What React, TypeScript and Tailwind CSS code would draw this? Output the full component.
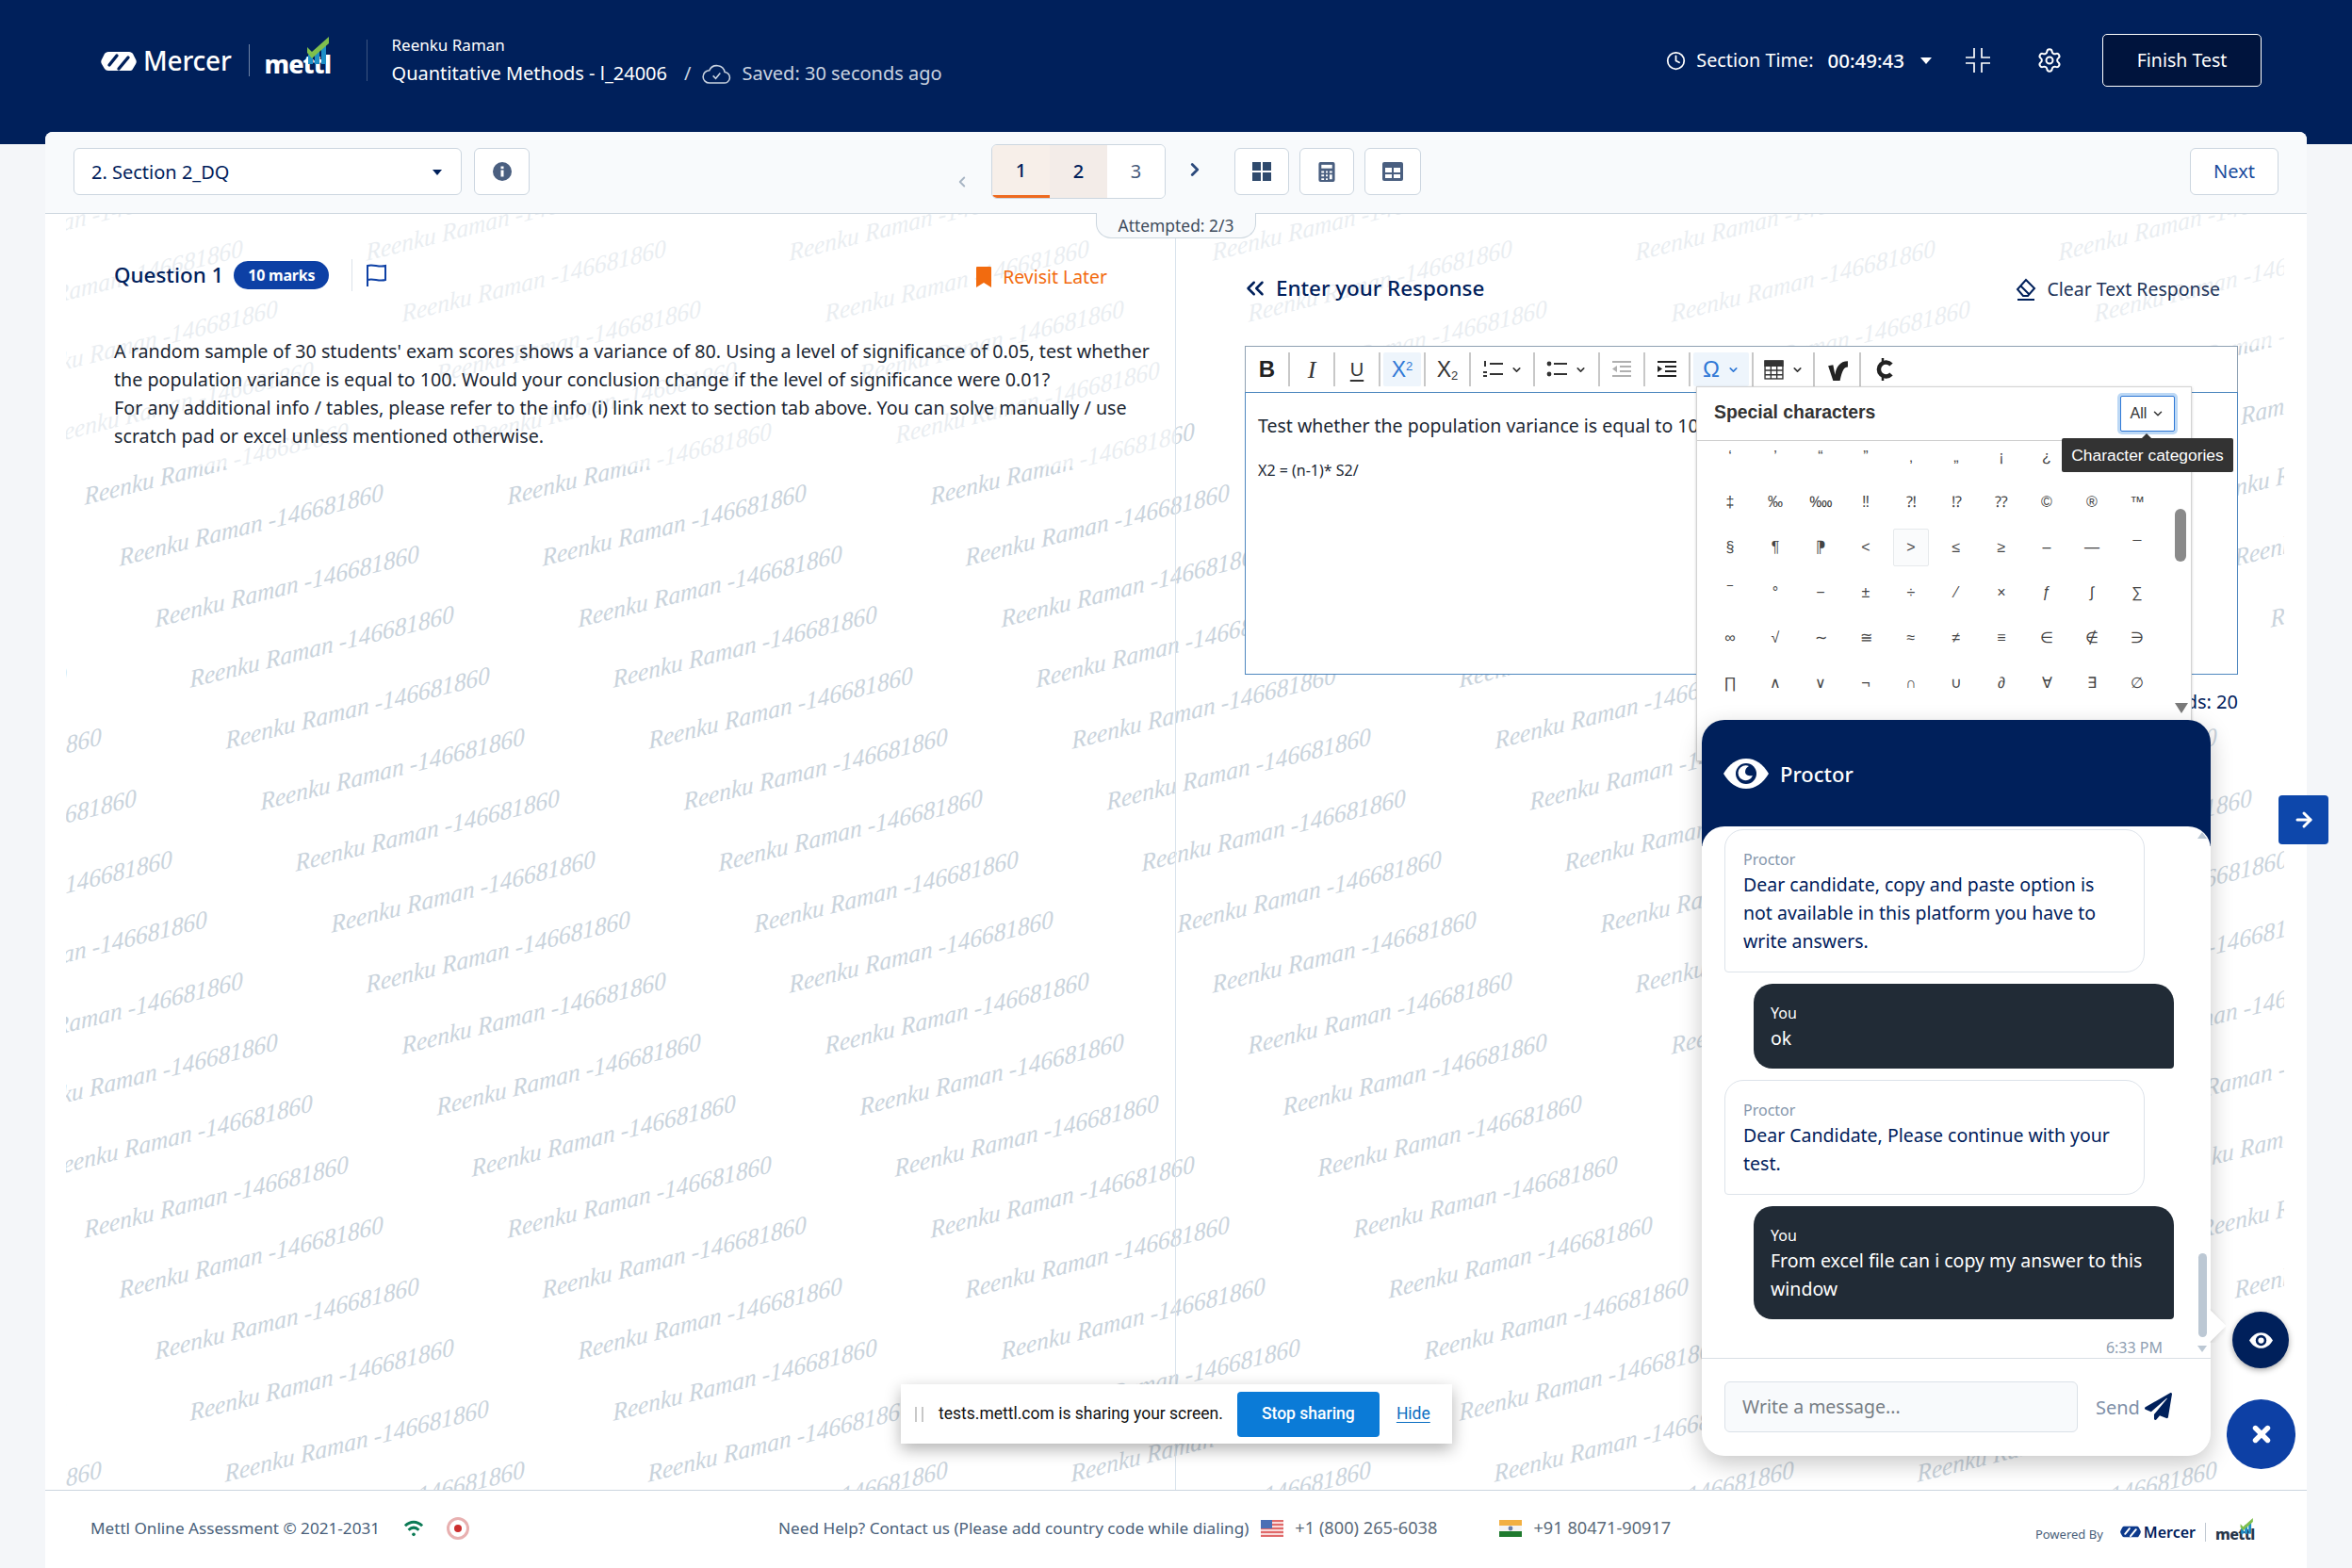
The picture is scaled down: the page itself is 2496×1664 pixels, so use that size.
import { ReactNode } from "react";
import { ArrowRight, ChevronDown, ChevronLeft, ChevronRight, ChevronsLeft, Clock, Settings, X } from "lucide-react";
import { FaPaperPlane } from "react-icons/fa";
import { clsx } from "clsx";

const NAVY = "#00205b";
const SANS = "font-['Noto_Sans',sans-serif]";

// watermark repeats on a lattice, start point of each text in page coordinates
function Watermark() {
  const items: { x: number; y: number }[] = [];
  for (let j = -7; j < 18; j++) {
    for (let i = -2; i < 7; i++) {
      const x = 90 + 449 * i + 37.4 * j;
      const y = 543 + 64.8 * j;
      if (x > -320 && x < 2424 && y > 200 && y < 1680) items.push({ x, y });
    }
  }
  return (
    <div className="absolute left-[22px] right-[24px] top-0 bottom-0 overflow-hidden pointer-events-none">
      {items.map((p, idx) => (
        <span
          key={idx}
          style={{ left: p.x - 70, top: p.y - 227 - 30 }}
          className="absolute h-[30px] leading-[30px] whitespace-nowrap origin-bottom-left -rotate-[14deg] -skew-x-[12deg] italic text-[26px] text-[#c9d3dc] font-['Liberation_Serif',serif]"
        >
          Reenku Raman -146681860
        </span>
      ))}
    </div>
  );
}

function MercerMark({ color, stripe, className }: { color: string; stripe: string; className: string }) {
  return (
    <svg viewBox="0 0 38 22" className={className}>
      <path d="M8 1h22c2 0 3 1 4 2l3 6c1 2 1 3 0 5l-3 5c-1 2-2 2-4 2H8c-2 0-3-1-4-2l-3-5c-1-2-1-3 0-5l3-6c1-1 2-2 4-2z" fill={color} />
      <path d="M9 15l8-10M19 19L29 7" stroke={stripe} strokeWidth="3.4" strokeLinecap="round" />
    </svg>
  );
}

function Bars({ className }: { className: string }) {
  return (
    <svg viewBox="0 0 26 30" className={className}>
      <rect x="2" y="20" width="5" height="10" fill="#1d8fc7" />
      <rect x="9" y="14" width="5" height="16" fill="#1d8fc7" />
      <rect x="16" y="9" width="5" height="21" fill="#1d8fc7" />
      <path d="M1 12l5 5L24 1v7L6 24 1 18z" fill="#7fbf4d" />
    </svg>
  );
}

function TopBar() {
  return (
    <header className="h-[153px] bg-[#00205b] text-white">
      <div className="h-[128px] pl-[107px] pr-[96px] flex items-center justify-between">
        <div className="flex items-center">
          <MercerMark color="#ffffff" stripe={NAVY} className="w-[38px] h-[22px] mt-[2px]" />
          <span className="ml-[7px] text-[28px] font-medium leading-none tracking-[-0.2px]">Mercer</span>
          <div className="ml-[18px] w-px h-[34px] bg-[#6f83a6]" />
          <div className="relative ml-[16px] w-[70px] h-[40px] flex items-end">
            <span className="text-[27px] font-extrabold leading-[32px] tracking-[-1px]">mettl</span>
            <Bars className="absolute right-0 top-[-6px] w-[26px] h-[30px]" />
          </div>
          <div className="ml-[38px] w-px h-[44px] bg-[#3c5480]" />
          <div className="ml-[26px] mt-[1px] flex flex-col">
            <div className="text-[17px] leading-[24px]">Reenku Raman</div>
            <div className="mt-[3px] flex items-center text-[20px] leading-[30px]">
              <span>Quantitative Methods - l_24006</span>
              <span className="ml-[18px] text-[#c9d3e0]">/</span>
              <svg viewBox="0 0 32 24" className="ml-[12px] w-[31px] h-[23px]" fill="none" stroke="#c9d3e0" strokeWidth="1.6">
                <path d="M8 22h16a6 6 0 0 0 1-12 9 9 0 0 0-17-2 7 7 0 0 0 0 14z" />
                <path d="M12 14l3 3 5-6" />
              </svg>
              <span className="ml-[11px] text-[#c9d3e0]">Saved: 30 seconds ago</span>
            </div>
          </div>
        </div>
        <div className="flex items-center">
          <Clock className="w-[21px] h-[21px]" strokeWidth={2} />
          <span className="ml-[11px] text-[19.8px]">Section Time:</span>
          <span className="ml-[15px] text-[20.5px] font-medium">00:49:43</span>
          <span className="ml-[17px] w-0 h-0 border-x-[6px] border-x-transparent border-t-[7px] border-t-white" />
          <svg viewBox="0 0 26 26" className="ml-[36px] w-[26px] h-[26px]" fill="none" stroke="#fff" strokeWidth="1.7">
            <path d="M9 0v10H0M17 0v10h9M9 26V16H0M17 26V16h9" />
          </svg>
          <Settings className="ml-[49px] w-[28px] h-[28px]" strokeWidth={1.7} />
          <button className="ml-[42px] w-[169px] h-[56px] rounded-[5px] border border-white bg-[#00143d] text-[19.5px]">Finish Test</button>
        </div>
      </div>
    </header>
  );
}

function SquareBtn({ children, className }: { children: ReactNode; className: string }) {
  return (
    <button className={clsx("h-[50px] bg-white border border-[#ccd6e0] rounded-[6px] flex items-center justify-center", className)}>
      {children}
    </button>
  );
}

function ActionBar() {
  return (
    <div className="relative h-[87px] shrink-0 bg-[#f8fafc] border-b border-[#ccd6df] rounded-t-[8px] pl-[30px] pr-[30px] flex items-start">
      <div className="mt-[17px] w-[412px] h-[50px] bg-white border border-[#ccd6e0] rounded-[6px] pl-[18px] pr-[20px] pt-[2px] flex items-center justify-between text-[20px] text-[#00205b]">
        <span>2. Section 2_DQ</span>
        <span className="w-0 h-0 border-x-[5px] border-x-transparent border-t-[6px] border-t-[#00205b]" />
      </div>
      <SquareBtn className="mt-[17px] ml-[13px] w-[59px]">
        <svg viewBox="0 0 20 20" className="w-[20px] h-[20px]">
          <circle cx="10" cy="10" r="10" fill="#4a5f80" />
          <rect x="8.5" y="8.5" width="3" height="7" fill="#fff" />
          <rect x="8.5" y="4.5" width="3" height="2.6" fill="#fff" />
        </svg>
      </SquareBtn>
      <ChevronLeft className="ml-[450px] mt-[44px] w-[18px] h-[18px] text-[#a8b5c4]" strokeWidth={2.5} />
      <div className="ml-[22px] mt-[13px] flex h-[58px] rounded-[6px] overflow-hidden border border-[#ccd6e0] text-[20px] font-medium text-[#00205b]">
        <div className="w-[61px] bg-[#f7efe9] border-b-[3px] border-b-[#ee6a1f] flex items-center justify-center">1</div>
        <div className="w-[61px] bg-[#f3ece8] flex items-center justify-center">2</div>
        <div className="w-[61px] bg-white text-[#45597a] font-normal flex items-center justify-center">3</div>
      </div>
      <ChevronRight className="ml-[20px] mt-[27px] w-[22px] h-[26px] text-[#2c4a7c]" strokeWidth={3} />
      <SquareBtn className="mt-[17px] ml-[31px] w-[58px]">
        <svg viewBox="0 0 20 20" className="w-[20px] h-[20px]" fill="#2f4a6d">
          <rect x="0" y="0" width="9" height="9" />
          <rect x="11" y="0" width="9" height="9" />
          <rect x="0" y="11" width="9" height="9" />
          <rect x="11" y="11" width="9" height="9" />
        </svg>
      </SquareBtn>
      <SquareBtn className="mt-[17px] ml-[11px] w-[58px]">
        <svg viewBox="0 0 18 22" className="w-[18px] h-[21px]">
          <rect x="0" y="0" width="18" height="22" rx="2" fill="#4a5f80" />
          <rect x="3" y="3" width="12" height="4" fill="#fff" />
          <path d="M3 10h3v2H3zM8 10h2v2H8zM12 10h3v2h-3zM3 14h3v2H3zM8 14h2v2H8zM12 14h3v5h-3zM3 18h3v2H3zM8 18h2v2H8z" fill="#fff" />
        </svg>
      </SquareBtn>
      <SquareBtn className="mt-[17px] ml-[11px] w-[60px]">
        <svg viewBox="0 0 22 20" className="w-[22px] h-[20px]">
          <rect x="0" y="0" width="22" height="20" rx="2" fill="#4a5f80" />
          <rect x="3" y="6" width="7" height="5" fill="#fff" />
          <rect x="12" y="6" width="7" height="5" fill="#fff" />
          <rect x="3" y="13" width="7" height="4" fill="#fff" />
          <rect x="12" y="13" width="7" height="4" fill="#fff" />
        </svg>
      </SquareBtn>
      <SquareBtn className="mt-[17px] ml-auto w-[94px] text-[20px] text-[#1a4a9c]">Next</SquareBtn>
      <div className="absolute left-[1115px] top-[86px] w-[170px] h-[27px] z-10 bg-[#f8fafc] border border-t-0 border-[#ccd6df] rounded-b-[16px] flex items-center justify-center text-[17.4px] text-[#3e4c5c]">
        Attempted: 2/3
      </div>
    </div>
  );
}

function QuestionPane() {
  return (
    <section className="relative w-[1200px] shrink-0 border-r border-[#d9e3ec]">
      <div className="bg-white/60 h-[268px] pl-[73px] pr-[16px] pt-[50px]">
        <div className="flex items-center h-[30px] pr-[56px]">
          <span className="text-[22.4px] font-medium text-[#00205b]">Question 1</span>
          <span className="ml-[11px] h-[30px] w-[101px] rounded-full bg-[#0d40a5] text-white text-[16px] font-bold tracking-[-0.2px] flex items-center justify-center">10 marks</span>
          <div className="ml-[24px] w-px h-[34px] bg-[#dce3ea]" />
          <svg viewBox="0 0 22 24" className="ml-[14px] w-[22px] h-[24px]" fill="none" stroke="#0d40a5" strokeWidth="2">
            <path d="M2 24V2c6-2 12 2 19 0v15c-7 2-13-2-19 0" />
          </svg>
          <svg viewBox="0 0 16 22" className="ml-auto mt-[3px] w-[16px] h-[22px]" fill="#f26b0f">
            <path d="M0 1a1 1 0 0 1 1-1h14a1 1 0 0 1 1 1v21l-8-5-8 5z" />
          </svg>
          <span className="ml-[12px] mt-[3px] text-[19.4px] text-[#f26b0f]">Revisit Later</span>
        </div>
        <p className="mt-[51px] text-[19.7px] leading-[30px] text-[#1c2733]">
          A random sample of 30 students' exam scores shows a variance of 80. Using a level of significance of 0.05, test whether the population variance is equal to 100. Would your conclusion change if the level of significance were 0.01?
          <br />
          For any additional info / tables, please refer to the info (i) link next to section tab above. You can solve manually / use scratch pad or excel unless mentioned otherwise.
        </p>
      </div>
    </section>
  );
}

function ToolBtn({ children, w, active, last }: { children: ReactNode; w: string; active?: boolean; last?: boolean }) {
  return (
    <div className={clsx("h-[36px] flex items-center justify-center", w, !last && "border-r-2 border-r-[#c8c8c8]")}>
      <div className={clsx("h-[36px] flex items-center justify-center gap-[8px] rounded-[2px]", active ? "w-[calc(100%-6px)] bg-[#eef5fc] text-[#2f78d6]" : "text-[#333333]")}>
        {children}
      </div>
    </div>
  );
}

const CHARS = [
  "‘", "’", "“", "”", "‚", "„", "¡", "¿", "", "",
  "‡", "‰", "‱", "‼", "⁈", "⁉", "⁇", "©", "®", "™",
  "§", "¶", "⁋", "<", ">", "≤", "≥", "–", "—", "¯",
  "‾", "°", "−", "±", "÷", "⁄", "×", "ƒ", "∫", "∑",
  "∞", "√", "∼", "≅", "≈", "≠", "≡", "∈", "∉", "∋",
  "∏", "∧", "∨", "¬", "∩", "∪", "∂", "∀", "∃", "∅",
];

function SpecialChars() {
  return (
    <div className="absolute left-[552px] top-[183px] w-[526px] h-[398px] z-20 bg-white border border-[#d4d4d4] shadow-[0_1px_3px_rgba(0,0,0,0.2)] font-['Liberation_Sans',sans-serif]">
      <div className="h-[57px] border-b border-[#cfcfcf] pl-[18px] pr-[17px] flex items-center justify-between">
        <span className="-mt-[2px] text-[19.4px] font-bold text-[#333333]">Special characters</span>
        <div className="w-[58px] h-[38px] bg-white border border-[#2f78d6] rounded-[2px] shadow-[0_0_0_3px_#bcd8f5] flex items-center justify-center gap-[5px] text-[16px] text-[#333333]">
          All
          <ChevronDown className="w-[14px] h-[14px]" strokeWidth={2.5} />
        </div>
      </div>
      <div className="h-[340px] overflow-hidden pl-[11px]">
        <div className="-mt-[7px] w-[480px] grid grid-cols-10 auto-rows-[48px] text-[16px] text-[#444444]">
          {CHARS.map((c, i) => (
            <div key={i} className="relative flex items-center justify-center">
              {c === ">" && <div className="absolute inset-x-[5px] inset-y-[4px] bg-[#fafbfc] border border-[#e6e9ec] rounded-[2px]" />}
              <span className="relative">{c}</span>
            </div>
          ))}
        </div>
      </div>
      <div className="absolute left-[507px] top-[129px] w-[12px] h-[56px] rounded-full bg-[#8a8a8a]" />
      <div className="absolute left-[507px] top-[335px] w-0 h-0 border-x-[7px] border-x-transparent border-t-[11px] border-t-[#7a7a7a]" />
      <div className="absolute left-[387px] top-[54px] w-[182px] h-[36px] bg-[#333333] rounded-[2px] flex items-center justify-center text-[17.4px] text-white whitespace-nowrap">
        Character categories
        <span className="absolute top-[-5px] left-[84px] w-0 h-0 border-x-[6px] border-x-transparent border-b-[6px] border-b-[#333333]" />
      </div>
    </div>
  );
}

function ResponsePane() {
  return (
    <section className="relative flex-1 pl-[73px] pr-[72px]">
      <div className="-ml-[73px] -mr-[72px] pl-[73px] pr-[92px] h-[140px] bg-white/60 pt-[61px]">
        <div className="flex items-center h-[36px]">
          <ChevronsLeft className="-ml-[4px] w-[30px] h-[32px] text-[#00205b]" strokeWidth={2} />
          <span className="ml-[7px] text-[22.4px] font-medium text-[#00205b]">Enter your Response</span>
          <svg viewBox="0 0 24 24" className="ml-auto mt-[2px] w-[24px] h-[24px]" fill="none" stroke="#00205b" strokeWidth="2">
            <path d="M12 2l9 9-7 8H9l-6-7zM6 8l9 9M3 23h18" />
          </svg>
          <span className="ml-[10px] mt-[2px] text-[19.5px] text-[#1c3358]">Clear Text Response</span>
        </div>
      </div>
      <div className="w-[1054px] h-[49px] bg-white border border-[#8fa1b3] border-b-0 flex items-center pl-[0px] text-[20px] font-['Liberation_Sans',sans-serif]">
        <ToolBtn w="w-[47px]"><span className="font-bold text-[24px] text-[#222222]">B</span></ToolBtn>
        <ToolBtn w="w-[48px]"><span className="italic text-[26px] font-['Liberation_Serif',serif]">I</span></ToolBtn>
        <ToolBtn w="w-[48px]"><span className="underline underline-offset-[4px] text-[20px]">U</span></ToolBtn>
        <ToolBtn w="w-[48px]" active><span className="text-[23px]">X<sup className="text-[13px]">2</sup></span></ToolBtn>
        <ToolBtn w="w-[48px]"><span className="text-[23px]">X<sub className="text-[13px]">2</sub></span></ToolBtn>
        <ToolBtn w="w-[68px]">
          <svg viewBox="0 0 22 20" className="w-[22px] h-[20px]" fill="#333">
            <rect x="8" y="3" width="14" height="2" />
            <rect x="8" y="14" width="14" height="2" />
            <rect x="2" y="1" width="2" height="6" />
            <rect x="1" y="12" width="4" height="2" />
            <rect x="1" y="16" width="4" height="2" />
          </svg>
          <ChevronDown className="w-[13px] h-[13px]" strokeWidth={3} />
        </ToolBtn>
        <ToolBtn w="w-[69px]">
          <svg viewBox="0 0 22 20" className="w-[22px] h-[20px]" fill="#333">
            <rect x="8" y="3" width="14" height="2" />
            <rect x="8" y="14" width="14" height="2" />
            <circle cx="3" cy="4" r="2.4" />
            <circle cx="3" cy="15" r="2.4" />
          </svg>
          <ChevronDown className="w-[13px] h-[13px]" strokeWidth={3} />
        </ToolBtn>
        <ToolBtn w="w-[48px]">
          <svg viewBox="0 0 22 20" className="w-[22px] h-[20px]" fill="#b0b0b0">
            <rect x="1" y="1" width="20" height="2" />
            <rect x="9" y="6" width="12" height="2" />
            <rect x="9" y="11" width="12" height="2" />
            <rect x="1" y="16" width="20" height="2" />
            <path d="M6 6v7L1 9.5z" />
          </svg>
        </ToolBtn>
        <ToolBtn w="w-[48px]">
          <svg viewBox="0 0 22 20" className="w-[22px] h-[20px]" fill="#222">
            <rect x="1" y="1" width="20" height="2" />
            <rect x="9" y="6" width="12" height="2" />
            <rect x="9" y="11" width="12" height="2" />
            <rect x="1" y="16" width="20" height="2" />
            <path d="M1 6v7l5-3.5z" />
          </svg>
        </ToolBtn>
        <ToolBtn w="w-[67px]" active>
          <span className="text-[24px]">Ω</span>
          <ChevronDown className="w-[13px] h-[13px]" strokeWidth={3} />
        </ToolBtn>
        <ToolBtn w="w-[65px]">
          <svg viewBox="0 0 20 20" className="w-[21px] h-[21px]" fill="none" stroke="#333" strokeWidth="1.3">
            <rect x="1" y="1" width="18" height="18" fill="#fff" />
            <rect x="1" y="1" width="18" height="5" fill="#333" />
            <path d="M7 6v13M13 6v13M1 10.5h18M1 15h18" />
          </svg>
          <ChevronDown className="w-[13px] h-[13px]" strokeWidth={3} />
        </ToolBtn>
        <ToolBtn w="w-[49px]">
          <svg viewBox="0 0 24 24" className="w-[25px] h-[25px]" fill="#222">
            <path d="M3 8l5-1 2 10C11 9 15 3 23 3v6c-4 0-6 4-8 14H8z" />
          </svg>
        </ToolBtn>
        <ToolBtn w="w-[49px]" last>
          <svg viewBox="0 0 20 24" className="w-[20px] h-[24px]" fill="none" stroke="#222" strokeWidth="4.5">
            <path d="M17 7a7.5 7.5 0 1 0 0 10" />
            <path d="M8 0v4M8 20v4" strokeWidth="2.5" />
          </svg>
        </ToolBtn>
      </div>
      <div className="w-[1054px] h-[300px] bg-white border border-[#4f88bf] overflow-hidden pl-[13px] pt-[20px] whitespace-nowrap text-[#1c2733]">
        <div className="text-[19.5px] leading-[30px]">Test whether the population variance is equal to 100</div>
        <div className="mt-[22px] text-[16px] leading-[20px]">X2 = (n-1)* S2/</div>
      </div>
      <div className="w-[1054px] mt-[16px] text-right text-[20px] leading-[26px] text-[#00205b]">Words: 20</div>
      <SpecialChars />
    </section>
  );
}

function Bubble({ you, text }: { you?: boolean; text: ReactNode }) {
  if (you) {
    return (
      <div className="ml-[31px] w-[446px] bg-[#212b36] rounded-[20px] rounded-br-[4px] pl-[18px] pr-[14px] pt-[19px] pb-[17px] text-white">
        <div className="text-[16px] leading-[24px]">You</div>
        <div className="text-[19.5px] leading-[30px]">{text}</div>
      </div>
    );
  }
  return (
    <div className="w-[446px] bg-white border border-[#dde3ea] rounded-[20px] rounded-bl-[4px] pl-[19px] pr-[27px] pt-[19px] pb-[17px]">
      <div className="text-[16px] leading-[24px] text-[#8496ab]">Proctor</div>
      <div className="text-[19.5px] leading-[30px] text-[#00205b]">{text}</div>
    </div>
  );
}

function Chat() {
  return (
    <div className="absolute left-[1806px] top-[764px] w-[540px] h-[781px] z-30 rounded-[24px] bg-white shadow-[0_8px_24px_rgba(0,0,0,0.22)] flex flex-col">
      <div className="h-[134px] shrink-0 -mb-[21px] bg-[#00205b] rounded-t-[24px] pl-[23px] pt-[41px] flex items-start text-white">
        <svg viewBox="0 0 48 32" className="w-[48px] h-[32px]">
          <path d="M0 16C6 6 14 0 24 0s18 6 24 16c-6 10-14 16-24 16S6 26 0 16z" fill="#fff" />
          <circle cx="24" cy="16" r="11" fill={NAVY} />
          <path d="M27 8a8 8 0 1 0 4 10c-3 1-8 0-8-4 0-3 2-5 4-6z" fill="#fff" />
        </svg>
        <span className="ml-[12px] text-[22px] font-medium leading-[32px]">Proctor</span>
      </div>
      <div className="relative flex-1 bg-white rounded-t-[24px] pl-[24px] pt-[3px] border-b border-[#d9dfe6] flex flex-col gap-[12px]">
        <Bubble text="Dear candidate, copy and paste option is not available in this platform you have to write answers." />
        <Bubble you text="ok" />
        <Bubble text="Dear Candidate, Please continue with your test." />
        <Bubble you text="From excel file can i copy my answer to this window" />
        <div className="absolute right-[51px] bottom-[0px] text-[16px] leading-[22px] text-[#8fa0b2]">6:33 PM</div>
        <div className="absolute right-[4px] top-[453px] w-[9px] h-[89px] rounded-full bg-[#bcc8d4]" />
        <div className="absolute right-[4px] top-[6px] w-0 h-0 border-x-[5px] border-x-transparent border-b-[7px] border-b-[#bcc8d4]" />
        <div className="absolute right-[4px] bottom-[6px] w-0 h-0 border-x-[5px] border-x-transparent border-t-[7px] border-t-[#bcc8d4]" />
      </div>
      <div className="h-[103px] shrink-0 rounded-b-[24px] pl-[24px] pt-[24px] flex items-start">
        <div className="w-[375px] h-[54px] bg-[#f8fafc] border border-[#dbe1e8] rounded-[6px] pl-[18px] flex items-center text-[19.5px] text-[#777e85]">Write a message...</div>
        <span className="ml-[19px] mt-[14px] text-[20px] leading-[28px] text-[#7e90a8]">Send</span>
        <FaPaperPlane className="ml-[5px] mt-[12px] w-[29px] h-[29px] text-[#00205b]" />
      </div>
      <div className="absolute left-[538px] top-[625px] w-[18px] h-[36px] overflow-hidden">
        <div className="w-[26px] h-[26px] -ml-[13px] mt-[5px] rotate-45 bg-white shadow-[0_2px_6px_rgba(0,0,0,0.15)]" />
      </div>
    </div>
  );
}

function Floating() {
  return (
    <>
      <button className="absolute left-[2418px] top-[844px] w-[53px] h-[52px] z-30 rounded-[4px] bg-[#0d47ab] flex items-center justify-center text-white">
        <ArrowRight className="w-[24px] h-[24px]" strokeWidth={3} />
      </button>
      <button className="absolute left-[2369px] top-[1392px] w-[60px] h-[60px] z-30 rounded-full bg-[#00205b] shadow-[0_2px_6px_rgba(0,0,0,0.35)] flex items-center justify-center">
        <svg viewBox="0 0 48 32" className="w-[25px] h-[17px]">
          <path d="M0 16C6 6 14 0 24 0s18 6 24 16c-6 10-14 16-24 16S6 26 0 16z" fill="#fff" />
          <circle cx="24" cy="16" r="11" fill={NAVY} />
          <circle cx="24" cy="16" r="6" fill="#fff" />
        </svg>
      </button>
      <button className="absolute left-[2363px] top-[1485px] w-[73px] h-[74px] z-30 rounded-full bg-[#0d40a5] flex items-center justify-center text-white">
        <X className="w-[26px] h-[26px]" strokeWidth={5} />
      </button>
      <div className="absolute left-[956px] top-[1469px] w-[585px] h-[63px] z-30 bg-white shadow-[0_6px_16px_rgba(0,0,0,0.3)] flex items-center pl-[15px] font-['Roboto',sans-serif]">
        <div className="w-[9px] h-[16px] border-x-2 border-x-[#c8c8c8]" />
        <span className="ml-[16px] text-[17.5px] text-[#111111]">tests.mettl.com is sharing your screen.</span>
        <button className="ml-[15px] w-[151px] h-[48px] rounded-[4px] bg-[#0b7bd7] text-white text-[17.5px] font-medium">Stop sharing</button>
        <span className="ml-[18px] text-[17.5px] text-[#0b6fc2] underline underline-offset-[3px]">Hide</span>
      </div>
    </>
  );
}

function Footer() {
  return (
    <footer className="relative h-[83px] shrink-0 bg-white border-t border-[#ccd6df] pl-[48px] pb-[3px] flex items-center text-[17.15px]">
      <span className="text-[#4a5f7a]">Mettl Online Assessment © 2021-2031</span>
      <svg viewBox="0 0 24 22" className="ml-[25px] w-[22px] h-[20px]" fill="none" stroke="#0b7a55" strokeWidth="3.2">
        <path d="M2 8c6-6 14-6 20 0M6 13c4-4 8-4 12 0" />
        <circle cx="12" cy="18" r="2" fill="#0b7a55" stroke="none" />
      </svg>
      <svg viewBox="0 0 24 24" className="ml-[24px] w-[24px] h-[24px]" fill="none">
        <circle cx="12" cy="12" r="10.5" stroke="#e8b0b0" strokeWidth="3" />
        <circle cx="12" cy="12" r="4" fill="#cc2f2f" />
      </svg>
      <span className="ml-[328px] text-[#4a5f7a]">Need Help? Contact us (Please add country code while dialing)</span>
      <svg viewBox="0 0 24 18" className="ml-[13px] w-[24px] h-[18px]">
        <rect width="24" height="18" fill="#e06a6a" />
        <path d="M0 3h24M0 7h24M0 11h24M0 15h24" stroke="#fff" strokeWidth="1.6" />
        <rect width="12" height="9" fill="#4a6fb5" />
      </svg>
      <span className="ml-[12px] text-[18.2px] text-[#5c6b7a]">+1 (800) 265-6038</span>
      <svg viewBox="0 0 24 18" className="ml-[66px] w-[24px] h-[18px]">
        <rect width="24" height="6" fill="#f2b042" />
        <rect y="6" width="24" height="6" fill="#f4f4f4" />
        <rect y="12" width="24" height="6" fill="#1f7a2e" />
        <circle cx="12" cy="9" r="2.4" fill="#6b7fa8" />
      </svg>
      <span className="ml-[12px] text-[18.2px] text-[#5c6b7a]">+91 80471-90917</span>
      <div className="ml-auto mr-[56px] mt-[8px] flex items-center text-[#00205b]">
        <span className="mt-[6px] text-[13px] text-[#4a5f7a]">Powered By</span>
        <MercerMark color="#0d3a8c" stripe="#ffffff" className="ml-[18px] w-[22px] h-[13px]" />
        <span className="ml-[3px] text-[16px] font-semibold leading-none">Mercer</span>
        <div className="ml-[10px] w-px h-[20px] bg-[#c0c8d2]" />
        <div className="relative ml-[10px] w-[41px] h-[24px] flex items-end">
          <span className="text-[16px] font-extrabold leading-[20px] tracking-[-0.6px] text-[#27364a]">mettl</span>
          <Bars className="absolute right-0 top-[-4px] w-[15px] h-[18px]" />
        </div>
      </div>
    </footer>
  );
}

export default function App() {
  return (
    <div className={clsx("relative w-[2496px] h-[1664px] overflow-hidden bg-[#f4f6f9]", SANS)}>
      <TopBar />
      <div className="mx-[48px] -mt-[13px] h-[1524px] flex flex-col bg-white rounded-t-[8px]">
        <ActionBar />
        <main className="relative flex-1 flex min-h-0">
          <Watermark />
          <QuestionPane />
          <ResponsePane />
        </main>
        <Footer />
      </div>
      <Chat />
      <Floating />
    </div>
  );
}
